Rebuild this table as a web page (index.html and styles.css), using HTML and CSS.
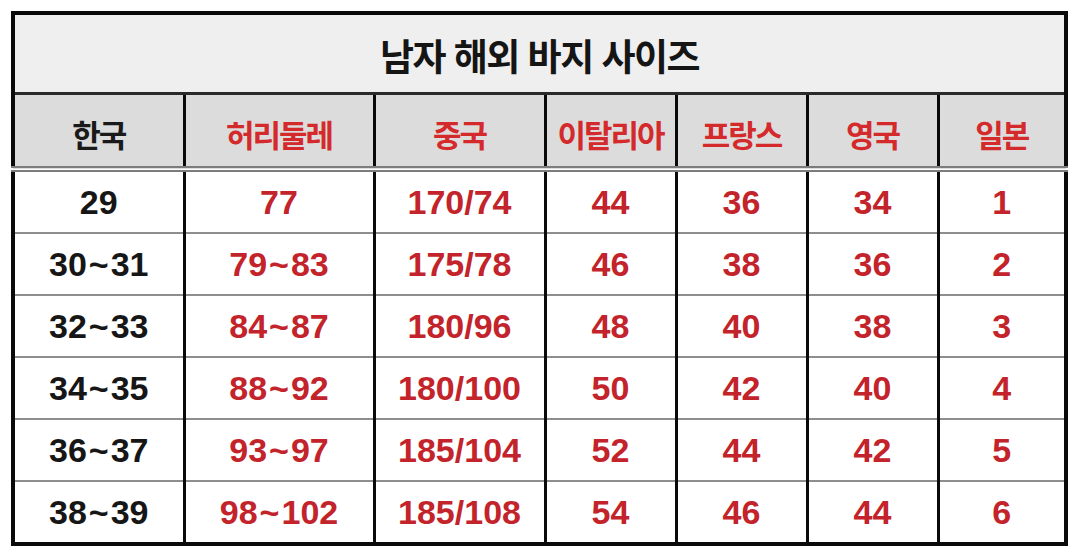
FILE: index.html
```html
<!DOCTYPE html>
<html lang="ko">
<head>
<meta charset="utf-8">
<title>남자 해외 바지 사이즈</title>
<link rel="stylesheet" href="styles.css">
</head>
<body>
<table class="size-table">
  <colgroup>
    <col class="c1"><col class="c2"><col class="c3"><col class="c4"><col class="c5"><col class="c6"><col class="c7">
  </colgroup>
  <thead>
    <tr class="title-row"><th colspan="7" class="title">남자 해외 바지 사이즈</th></tr>
    <tr class="head-row">
      <th class="dark">한국</th>
      <th>허리둘레</th>
      <th>중국</th>
      <th>이탈리아</th>
      <th>프랑스</th>
      <th>영국</th>
      <th>일본</th>
    </tr>
  </thead>
  <tbody>
    <tr><td class="dark">29</td><td>77</td><td>170/74</td><td>44</td><td>36</td><td>34</td><td>1</td></tr>
    <tr><td class="dark">30<span class="t">~</span>31</td><td>79<span class="t">~</span>83</td><td>175/78</td><td>46</td><td>38</td><td>36</td><td>2</td></tr>
    <tr><td class="dark">32<span class="t">~</span>33</td><td>84<span class="t">~</span>87</td><td>180/96</td><td>48</td><td>40</td><td>38</td><td>3</td></tr>
    <tr><td class="dark">34<span class="t">~</span>35</td><td>88<span class="t">~</span>92</td><td>180/100</td><td>50</td><td>42</td><td>40</td><td>4</td></tr>
    <tr><td class="dark">36<span class="t">~</span>37</td><td>93<span class="t">~</span>97</td><td>185/104</td><td>52</td><td>44</td><td>42</td><td>5</td></tr>
    <tr class="last"><td class="dark">38<span class="t">~</span>39</td><td>98<span class="t">~</span>102</td><td>185/108</td><td>54</td><td>46</td><td>44</td><td>6</td></tr>
  </tbody>
</table>
</body>
</html>
```
FILE: styles.css
```css
html, body {
  margin: 0;
  padding: 0;
  background: #ffffff;
}

body {
  padding: 11px 0 0 11px;
  font-family: "Liberation Sans", "Noto Sans CJK KR", sans-serif;
}

.size-table {
  border-collapse: collapse;
  table-layout: fixed;
  width: 1057px;
  border: 4px solid #0a0a0a;
}

.c1 { width: 171px; }
.c2 { width: 190px; }
.c3 { width: 171px; }
.c4 { width: 131px; }
.c5 { width: 131px; }
.c6 { width: 131px; }
.c7 { width: 128px; }

.size-table th,
.size-table td {
  padding: 0;
  text-align: center;
  vertical-align: middle;
  font-weight: 700;
  color: #c92326;
  border-left: 3px solid #0a0a0a;
  border-right: 3px solid #0a0a0a;
}

.title-row .title {
  height: 75px;
  background: #efefef;
  color: #151515;
  font-size: 37px;
  letter-spacing: -1.5px;
  border-bottom: 3px solid #2a2a2a;
  padding-top: 2px;
}

.head-row th {
  height: 65px;
  background: #dcdcdc;
  font-size: 31px;
  letter-spacing: -2px;
  border-bottom: 6px double #7c7c7c;
  padding-top: 6px;
  color: #d42a2c;
}

.head-row th.dark {
  color: #1a1a1a;
}

.size-table td {
  height: 60px;
  font-size: 34px;
  border-bottom: 2px solid #8e8e8e;
  color: #c3232a;
}

.size-table td .t {
  margin: 0 2px;
}

.size-table tr.last td {
  border-bottom: 4px solid #0a0a0a;
}

.size-table td.dark {
  color: #161616;
}
```
